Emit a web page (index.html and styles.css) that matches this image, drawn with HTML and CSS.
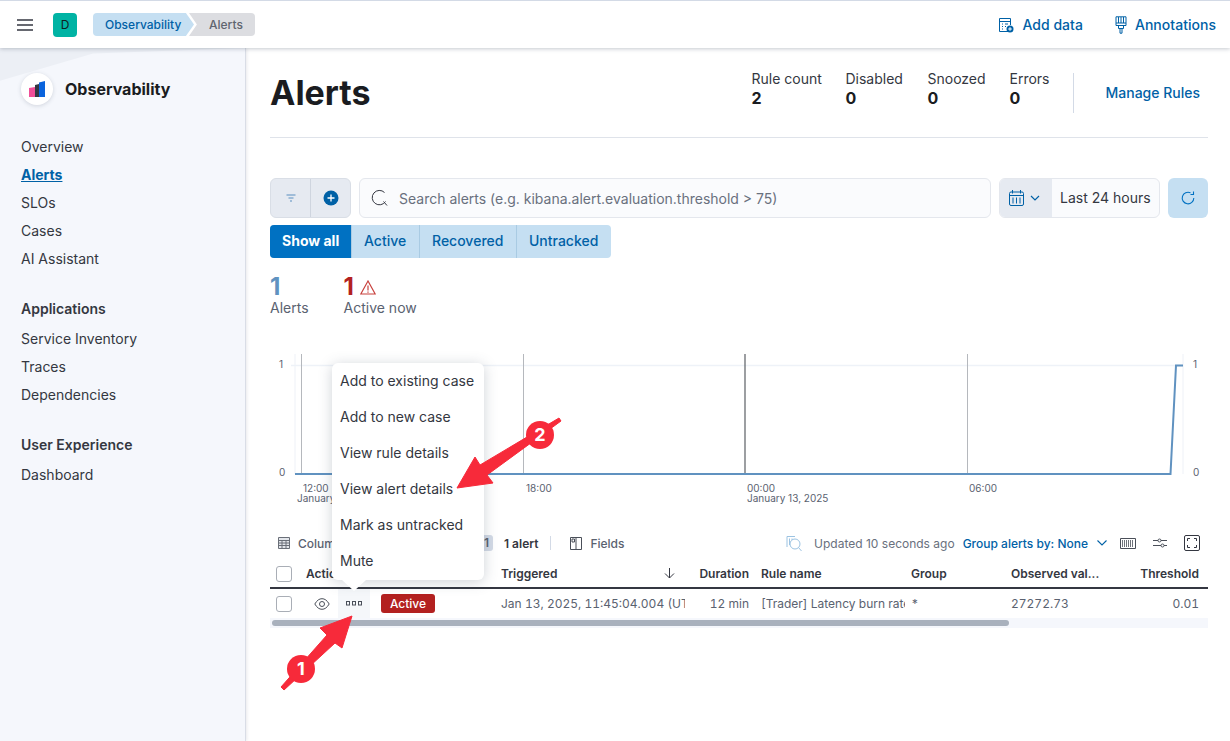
FILE: index.html
```html
<!DOCTYPE html>
<html lang="en">
<head>
    <meta charset="UTF-8">
    <meta name="viewport" content="width=device-width, initial-scale=1.0">
    <title>Alerts - Observability</title>
    <link rel="stylesheet" href="styles.css">
</head>
<body>

<header class="topbar">
    <svg class="burger" width="16" height="12" viewBox="0 0 16 12"><path d="M0 1h16M0 6h16M0 11h16" stroke="#343741" stroke-width="1.4"/></svg>
    <div class="avatar">D</div>
    <nav class="crumbs">
        <span class="crumb crumb-first">Observability</span>
        <span class="crumb crumb-last">Alerts</span>
    </nav>
    <div class="topbar-links">
        <a class="top-link">
            <svg width="16" height="16" viewBox="0 0 16 16" fill="none" stroke="#0061a6"><path d="M10 14.5H1.5v-13h11V8"/><path d="M1.5 4.5h11M4 7h1M4 9.5h1M4 12h1M7 7h3M7 9.5h1"/><circle cx="12" cy="12" r="3.5" fill="#0061a6" stroke="none"/><path d="M12 10.2v3.6M10.2 12h3.6" stroke="#fff"/></svg>
            Add data
        </a>
        <a class="top-link">
            <svg width="12" height="18" viewBox="0 0 12 18" fill="none" stroke="#0061a6"><path d="M1 .8h10v8.7H1zM1 7h10M3.500 1v6M6 1v6M8.500 1v6M3.500 9.500v3h5v-3M5 12.500v4.700h2v-4.700"/></svg>
            Annotations
        </a>
    </div>
</header>

<div class="layout">
    <aside class="sidebar">
        <div class="brand">
            <div class="brand-logo">
                <svg width="16" height="16" viewBox="0 0 16 16"><path d="M0 7l6-1v10H0z" fill="#f04e98"/><path d="M6 4l4-1v13H6z" fill="#343741"/><path d="M10 1.500L16 0v16h-6z" fill="#0b64dd"/></svg>
            </div>
            <span class="brand-name">Observability</span>
        </div>
        <ul class="nav-list">
            <li>Overview</li>
            <li class="nav-active">Alerts</li>
            <li>SLOs</li>
            <li>Cases</li>
            <li>AI Assistant</li>
        </ul>
        <h4 class="nav-title">Applications</h4>
        <ul class="nav-list">
            <li>Service Inventory</li>
            <li>Traces</li>
            <li>Dependencies</li>
        </ul>
        <h4 class="nav-title">User Experience</h4>
        <ul class="nav-list">
            <li>Dashboard</li>
        </ul>
    </aside>

    <main class="content">
        <div class="page-head">
            <h1>Alerts</h1>
            <div class="rule-stats">
                <div class="rule-stat rule-stat-count"><span>Rule count</span><b>2</b></div>
                <div class="rule-stat rule-stat-disabled"><span>Disabled</span><b>0</b></div>
                <div class="rule-stat rule-stat-snoozed"><span>Snoozed</span><b>0</b></div>
                <div class="rule-stat rule-stat-errors"><span>Errors</span><b>0</b></div>
            </div>
            <div class="head-divider"></div>
            <a class="manage-link">Manage Rules</a>
        </div>

        <div class="query-bar">
            <div class="filter-group">
                <div class="filter-btn">
                    <svg width="12" height="10" viewBox="0 0 12 10" fill="none" stroke="#5a8fc0"><path d="M1.500 2h9M3.500 5h5M5 8h2"/></svg>
                </div>
                <div class="filter-btn">
                    <svg width="16" height="16" viewBox="0 0 16 16"><circle cx="8" cy="8" r="7.500" fill="#0061a6"/><path d="M8 4.500v7M4.500 8h7" stroke="#fff" stroke-width="1.300"/></svg>
                </div>
            </div>
            <div class="search-box">
                <svg width="18" height="18" viewBox="0 0 18 18" fill="none" stroke="#343741"><path d="M13.500 3.500A7.200 7.200 0 1 0 14.500 12.500M12.500 12.500l3.500 4"/></svg>
                <span>Search alerts (e.g. kibana.alert.evaluation.threshold &gt; 75)</span>
            </div>
            <div class="date-picker">
                <div class="date-btn">
                    <svg width="15" height="16" viewBox="0 0 15 16" fill="none" stroke="#0061a6"><rect x=".5" y="2" width="14" height="13.500" rx="1.500"/><path d="M.5 5.500h14M3.500 0v3.500M11.500 0v3.500M4 7.500v6M7.500 7.500v6M11 7.500v6"/></svg>
                    <svg width="10" height="6" viewBox="0 0 10 6" fill="none" stroke="#0061a6" stroke-width="1.200"><path d="M1 1l4 4 4-4"/></svg>
                </div>
                <span class="date-text">Last 24 hours</span>
            </div>
            <div class="refresh-btn">
                <svg width="14" height="14" viewBox="0 0 14 14" fill="none" stroke="#0071c2" stroke-width="1.100"><path d="M9.500 1.800A5.800 5.800 0 1 0 12.800 7M12.500 .5v3H9.500"/></svg>
            </div>
        </div>

        <div class="status-tabs">
            <span class="tab tab-on">Show all</span>
            <span class="tab">Active</span>
            <span class="tab">Recovered</span>
            <span class="tab">Untracked</span>
        </div>

        <div class="alert-counts">
            <div class="count">
                <b class="count-num count-blue">1</b>
                <span>Alerts</span>
            </div>
            <div class="count">
                <b class="count-num count-red">1
                    <svg width="16" height="15" viewBox="0 0 16 15" fill="none" stroke="#c8413d" stroke-width="1.200"><path d="M8 1L.8 14h14.400z"/><path d="M8 5.500v5M8 11.500v1.200"/></svg>
                </b>
                <span>Active now</span>
            </div>
        </div>

        <svg class="chart" width="938" height="170" viewBox="270 346 938 170">
            <path d="M295 353v120M1183 353v120" stroke="#eef1f7" stroke-width="1"/>
            <path d="M291 364.500h892" stroke="#eef2f8" stroke-width="1.500"/>
            <path d="M301.500 353v120M523.500 353v120M967.500 353v120" stroke="#b5b8bd" stroke-width="1"/>
            <path d="M745 353v120" stroke="#5b5e64" stroke-width="1.200"/>
            <path d="M295 473H1170.500L1176 364.500H1183" fill="none" stroke="#6092c0" stroke-width="2"/>
            <text class="chart-label" x="279" y="367">1</text>
            <text class="chart-label" x="279" y="475">0</text>
            <text class="chart-label" x="1193" y="367">1</text>
            <text class="chart-label" x="1193" y="475">0</text>
            <text class="chart-label" x="303" y="491">12:00</text>
            <text class="chart-label" x="297" y="501">January 13, 2025</text>
            <text class="chart-label" x="526" y="491">18:00</text>
            <text class="chart-label" x="747" y="491">00:00</text>
            <text class="chart-label" x="747" y="501">January 13, 2025</text>
            <text class="chart-label" x="969" y="491">06:00</text>
        </svg>

        <div class="table-toolbar">
            <span class="tool tool-columns">
                <svg width="12" height="12" viewBox="0 0 12 12" fill="#e3e6eb" stroke="#6a6f78"><path d="M.5.500h11v11H.5zM.5 3.500h11M.5 6h11M.5 8.500h11M4 3.500v8M8 3.500v8"/></svg>
                Columns
            </span>
            <span class="sort-badge">1</span>
            <span class="tool tool-sorted">1 alert</span>
            <span class="tool-sep"></span>
            <span class="tool tool-fields">
                <svg width="12" height="13" viewBox="0 0 12 13" fill="none" stroke="#4a4f59"><path d="M.5.500h11v12H.5zM6 .5v12M2 2h2.500v3H2z"/></svg>
                Fields
            </span>
            <span class="tool tool-updated">
                <svg width="16" height="17" viewBox="0 0 16 17" fill="none" stroke="#9cc3e2"><path d="M1 12V1.500h8M3.500 10V3.500M6 5V3.500"/><circle cx="9" cy="9" r="5"/><path d="M12.500 12.500l3 3.500"/></svg>
                Updated 10 seconds ago
            </span>
            <span class="group-by">Group alerts by: None</span>
            <svg class="group-chevron" width="10" height="6" viewBox="0 0 10 6" fill="none" stroke="#0061a6" stroke-width="1.100"><path d="M.5.500L5 5 9.500.5"/></svg>
            <svg class="tool-icon" width="16" height="11" viewBox="0 0 16 11" fill="none" stroke="#4a4f59"><path d="M.5.500h15v10H.5z"/><path d="M2.500 2v7M4.500 2v7M6.500 2v7M8.500 2v7M10.500 2v7M12.500 2v7" stroke-width=".8"/></svg>
            <svg class="tool-icon" width="14" height="10" viewBox="0 0 14 10" fill="none" stroke="#4a4f59"><path d="M0 2.500h5M8 2.500h6M0 7.500h8M11 7.500h3"/><circle cx="6.500" cy="2.500" r="1.500"/><circle cx="9.500" cy="7.500" r="1.500"/></svg>
            <span class="fullscreen">
                <svg width="10" height="10" viewBox="0 0 10 10" fill="none" stroke="#343741"><path d="M.5 3V.5H3M7 .5h2.500V3M9.500 7v2.500H7M3 9.500H.5V7"/></svg>
            </span>
        </div>

        <div class="grid-table">
            <div class="grid-row grid-head">
                <div class="cell"><span class="check"></span></div>
                <div class="cell cell-actions">Actions</div>
                <div class="cell"></div>
                <div class="cell"></div>
                <div class="cell cell-triggered">Triggered
                    <svg width="11" height="11" viewBox="0 0 11 11" fill="none" stroke="#343741"><path d="M5.500 0v10M1 5.500l4.500 4.500L10 5.500"/></svg>
                </div>
                <div class="cell cell-right">Duration</div>
                <div class="cell">Rule name</div>
                <div class="cell">Group</div>
                <div class="cell">Observed val...</div>
                <div class="cell cell-right">Threshold</div>
            </div>
            <div class="grid-row grid-body">
                <div class="cell"><span class="check"></span></div>
                <div class="cell cell-center">
                    <svg width="16" height="12" viewBox="0 0 16 12" fill="none" stroke="#4a4f59"><path d="M.8 6C3 2.300 5.300.7 8 .7s5 1.600 7.200 5.300C13 9.700 10.700 11.300 8 11.300S3 9.700.8 6z"/><circle cx="8" cy="6" r="2.500"/></svg>
                </div>
                <div class="cell cell-center cell-open">
                    <svg width="16" height="5" viewBox="0 0 16 5" fill="none" stroke="#4a4f59"><rect x=".5" y=".5" width="3" height="3.500"/><rect x="6.500" y=".5" width="3" height="3.500"/><rect x="12.500" y=".5" width="3" height="3.500"/></svg>
                </div>
                <div class="cell cell-status"><span class="badge-active">Active</span></div>
                <div class="cell cell-clip cell-date"><span>Jan 13, 2025, 11:45:04.004 (UTC)</span></div>
                <div class="cell cell-right">12 min</div>
                <div class="cell cell-clip cell-rule"><span>[Trader] Latency burn rate rule</span></div>
                <div class="cell">*</div>
                <div class="cell">27272.73</div>
                <div class="cell cell-right">0.01</div>
            </div>
            <div class="scroll-track"><div class="scroll-thumb"></div></div>
        </div>
    </main>
</div>

<!-- popover over the table row -->
<div class="action-menu">
    <div class="menu-item">Add to existing case</div>
    <div class="menu-item">Add to new case</div>
    <div class="menu-item">View rule details</div>
    <div class="menu-item">View alert details</div>
    <div class="menu-item">Mark as untracked</div>
    <div class="menu-item">Mute</div>
</div>

<!-- red callouts -->
<svg class="callouts" width="1230" height="741" viewBox="0 0 1230 741">
    <path d="M352 616L320 628L327 635L281 687L284 690L335 643L342 648Z" fill="#f72a3a" stroke="#f72a3a" stroke-linejoin="round"/>
    <circle cx="301" cy="669" r="14" fill="#f72a3a"/>
    <text class="callout-num" x="301" y="675">1</text>
    <path d="M457 488L475 457L480 465L559 418L561 421L487 475L493 483Z" fill="#f72a3a" stroke="#f72a3a" stroke-linejoin="round"/>
    <circle cx="540" cy="435" r="14" fill="#f72a3a"/>
    <text class="callout-num" x="540" y="441">2</text>
</svg>

</body>
</html>
```

FILE: styles.css
```css
* {
    box-sizing: border-box;
}
html, body {
    height: 741px;
    overflow: hidden;
}
body {
    margin: 0;
    position: relative;
    font-family: 'Inter', 'Liberation Sans', sans-serif;
    font-size: 14px;
    color: #343741;
    background-color: #ffffff;
}

/* top bar */
.topbar {
    position: relative;
    z-index: 2;
    display: flex;
    align-items: center;
    height: 48px;
    padding-left: 17px;
    padding-right: 14px;
    background-color: #ffffff;
    border-top: 1px solid #d3dae6;
    box-shadow: 0 1px 4px rgba(65, 78, 101, 0.3);
}
.avatar {
    width: 24px;
    height: 24px;
    margin-left: 20px;
    border-radius: 4px;
    background-color: #00b3a4;
    font-size: 12px;
    line-height: 24px;
    text-align: center;
    color: #10201f;
}
.crumbs {
    display: flex;
    margin-left: 16px;
    font-size: 12px;
    font-weight: 500;
}
.crumb {
    height: 23px;
    line-height: 23px;
}
.crumb-first {
    width: 101px;
    padding-left: 12px;
    background-color: #c5dff2;
    color: #0061a6;
    border-radius: 4px 0 0 4px;
    clip-path: polygon(0 0, 92% 0, 100% 50%, 92% 100%, 0 100%);
}
.crumb-last {
    width: 66px;
    margin-left: -5px;
    padding-left: 20px;
    background-color: #dcdde1;
    color: #5f6570;
    border-radius: 0 4px 4px 0;
    clip-path: polygon(0 0, 100% 0, 100% 100%, 0 100%, 12% 50%);
}
.topbar-links {
    display: flex;
    gap: 32px;
    margin-left: auto;
}
.top-link {
    display: flex;
    align-items: center;
    gap: 8px;
    color: #0061a6;
    font-weight: 500;
    letter-spacing: 0.03px;
}

.layout {
    display: flex;
    height: 693px;
}

/* left nav */
.sidebar {
    position: relative;
    width: 246px;
    flex-shrink: 0;
    padding-top: 25px;
    padding-left: 21px;
    background-color: #f5f7fc;
    border-right: 1px solid #d9dde6;
    box-shadow: 1px 0 3px rgba(65, 78, 101, 0.12);
}
.sidebar::before {
    content: '';
    position: absolute;
    left: 0;
    top: 0;
    width: 245px;
    height: 40px;
    background-color: #eceff5;
    clip-path: polygon(0 0, 100% 0, 38% 14%, 0 82%);
}
.brand {
    position: relative;
    display: flex;
    align-items: center;
    gap: 12px;
    margin-bottom: 28px;
}
.brand-logo {
    display: flex;
    align-items: center;
    justify-content: center;
    width: 32px;
    height: 32px;
    border-radius: 50%;
    background-color: #ffffff;
    box-shadow: 0 1px 4px rgba(65, 78, 101, 0.2);
}
.brand-name {
    font-size: 16px;
    font-weight: 700;
    color: #1a1c21;
    margin-top: -1px;
}
.nav-list {
    list-style: none;
    margin: 0;
    padding: 0;
}
.nav-list li {
    height: 28px;
    line-height: 28px;
}
.nav-active {
    font-weight: 700;
    color: #0061a6;
    text-decoration: underline;
}
.nav-title {
    margin: 22px 0 2px;
    height: 28px;
    line-height: 28px;
    font-size: 14px;
    font-weight: 600;
}

/* main */
.content {
    flex: 1;
    min-width: 0;
    padding: 0 22px 0 24px;
}
.page-head {
    display: flex;
    align-items: center;
    height: 90px;
    border-bottom: 1px solid #dfe3ea;
}
.page-head h1 {
    margin: 0 auto 0 0;
    font-size: 34px;
    font-weight: 700;
    color: #1a1c21;
}
.rule-stats {
    display: flex;
    padding-bottom: 10px;
}
.rule-stat {
    display: flex;
    flex-direction: column;
}
.rule-stat span {
    line-height: 20px;
}
.rule-stat b {
    font-size: 16px;
    line-height: 18px;
    color: #1a1c21;
}
.rule-stat-count { width: 94px; }
.rule-stat-disabled { width: 82px; }
.rule-stat-snoozed { width: 82px; }
.rule-stat-errors { width: 64px; }
.head-divider {
    width: 1px;
    height: 40px;
    background-color: #d3dae6;
}
.manage-link {
    margin-left: 31px;
    margin-right: 8px;
    color: #0061a6;
    font-weight: 500;
}

.query-bar {
    display: flex;
    gap: 8px;
    height: 40px;
    margin-top: 40px;
}
.filter-group {
    display: flex;
    width: 81px;
    border: 1px solid #d9dee6;
    border-radius: 6px;
    background-color: #e6eaf1;
}
.filter-btn {
    display: flex;
    flex: 1;
    align-items: center;
    justify-content: center;
}
.filter-btn + .filter-btn {
    border-left: 1px solid #cfd5df;
}
.search-box {
    display: flex;
    flex: 1;
    align-items: center;
    gap: 10px;
    padding-left: 11px;
    background-color: #fafbfd;
    border: 1px solid #e4e7ed;
    border-radius: 6px;
    color: #69707d;
}
.date-picker {
    display: flex;
    width: 161px;
    background-color: #fafbfd;
    border: 1px solid #e4e7ed;
    border-radius: 6px;
    overflow: hidden;
}
.date-btn {
    display: flex;
    align-items: center;
    gap: 6px;
    width: 52px;
    padding-left: 9px;
    background-color: #e6eaf1;
}
.date-text {
    padding-left: 8px;
    line-height: 38px;
}
.refresh-btn {
    display: flex;
    align-items: center;
    justify-content: center;
    width: 40px;
    border-radius: 6px;
    background-color: #c5dff2;
}

.status-tabs {
    display: grid;
    grid-template-columns: 81px 68px 97px 95px;
    width: 341px;
    height: 33px;
    margin-top: 7px;
    border-radius: 4px;
    overflow: hidden;
    background-color: #c5dff2;
    color: #0061a6;
    font-weight: 500;
    line-height: 32px;
}
.tab {
    padding-left: 12px;
    border-left: 1px solid #a9cbe3;
}
.tab-on {
    border-left: 0;
    background-color: #0071c2;
    color: #ffffff;
    font-weight: 700;
}

.alert-counts {
    display: flex;
    gap: 35px;
    margin-top: 15px;
    color: #5a6270;
}
.count {
    display: flex;
    flex-direction: column;
}
.count span {
    line-height: 18px;
}
.count-num {
    display: flex;
    align-items: center;
    gap: 6px;
    height: 26px;
    font-size: 24px;
    font-weight: 700;
}
.count-blue { color: #6092c0; }
.count-red { color: #b32120; }
.count-num svg {
    margin-top: 3px;
}

.chart {
    display: block;
    margin-top: 30px;
}
.chart-label {
    font-size: 10px;
    fill: #5a6270;
}

.table-toolbar {
    display: flex;
    align-items: center;
    height: 26px;
    margin-top: 13px;
    padding-left: 8px;
    font-size: 12px;
    color: #5a6270;
}
.tool {
    display: flex;
    align-items: center;
    gap: 8px;
    font-weight: 500;
}
.tool-columns {
    width: 202px;
}
.sort-badge {
    width: 13px;
    height: 16px;
    border-radius: 0 3px 3px 0;
    background-color: #d3dae6;
    line-height: 16px;
    text-align: center;
    font-weight: 600;
}
.tool-sorted {
    margin-left: 11px;
    color: #343741;
    font-weight: 600;
}
.tool-sep {
    width: 1px;
    height: 14px;
    margin-left: 12px;
    background-color: #d3dae6;
}
.tool-fields {
    margin-left: 19px;
}
.tool-updated {
    gap: 12px;
    margin-left: auto;
    font-weight: 400;
    color: #69707d;
}
.group-by {
    margin-left: 8px;
    color: #0061a6;
    font-weight: 500;
}
.group-chevron {
    margin-left: 9px;
}
.tool-icon {
    margin-left: 13px;
}
.tool-icon + .tool-icon {
    margin-left: 17px;
}
.fullscreen {
    display: flex;
    align-items: center;
    justify-content: center;
    width: 16px;
    height: 16px;
    margin-left: 17px;
    margin-right: 8px;
    border: 1px solid #343741;
    border-radius: 2px;
}

.grid-table {
    font-size: 12px;
}
.grid-row {
    display: grid;
    grid-template-columns: 36px 32px 32px 131px 188px 72px 150px 100px 99px 98px;
}
.grid-head {
    height: 33px;
    padding-top: 4px;
    border-bottom: 2px solid #343741;
    font-weight: 600;
}
.grid-body {
    height: 29px;
    color: #5a6270;
    font-variant-numeric: tabular-nums;
}
.cell {
    display: flex;
    align-items: center;
    min-width: 0;
    white-space: nowrap;
}
.cell-right {
    justify-content: flex-end;
    padding-right: 12px;
}
.grid-row .cell:last-child {
    padding-right: 9px;
}
.cell-center {
    justify-content: center;
}
.cell-open {
    background-color: #f5f7fa;
}
.cell-status {
    padding-left: 11px;
}
.cell-triggered {
    justify-content: space-between;
    padding-right: 14px;
}
.cell-clip span {
    overflow: hidden;
}
.cell-date {
    padding-right: 4px;
}
.cell-rule {
    padding-right: 6px;
}
.check {
    width: 16px;
    height: 16px;
    margin-left: 6px;
    border: 1px solid #a9aeb6;
    border-radius: 3px;
    background-color: #ffffff;
}
.badge-active {
    display: block;
    width: 54px;
    height: 19px;
    border-radius: 3px;
    background-color: #b32120;
    color: #ffffff;
    font-weight: 500;
    line-height: 19px;
    text-align: center;
}
.scroll-track {
    height: 10px;
    padding: 2px;
    background-color: #f5f7fc;
}
.scroll-thumb {
    width: 737px;
    height: 6px;
    border-radius: 3px;
    background-color: #a9b1bd;
}

/* overlays */
.action-menu {
    position: absolute;
    left: 332px;
    top: 363px;
    z-index: 3;
    width: 152px;
    height: 217px;
    background-color: #ffffff;
    border-radius: 6px;
    box-shadow: 0 2px 14px rgba(65, 78, 101, 0.25);
}
.action-menu::after {
    content: '';
    position: absolute;
    left: 10px;
    top: 217px;
    border-left: 12px solid transparent;
    border-right: 12px solid transparent;
    border-top: 11px solid #ffffff;
}
.menu-item {
    height: 36px;
    padding-left: 8px;
    line-height: 36px;
}
.callouts {
    position: absolute;
    left: 0;
    top: 0;
    z-index: 4;
}
.callout-num {
    font-size: 18px;
    font-weight: 700;
    fill: #ffffff;
    text-anchor: middle;
}
```
